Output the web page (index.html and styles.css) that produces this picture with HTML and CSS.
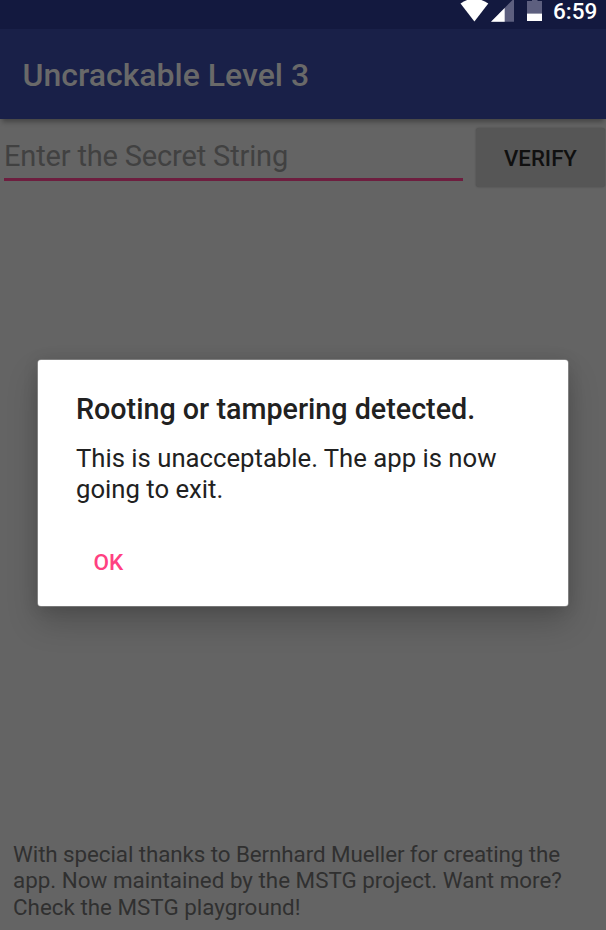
FILE: index.html
```html
<!DOCTYPE html>
<html lang="en">
<head>
<meta charset="utf-8">
<title>Uncrackable Level 3</title>
<link rel="stylesheet" href="styles.css">
</head>
<body>
<div class="screen">
  <header class="status">
    <svg class="signals" width="86" height="28" viewBox="0 0 86 28">
      <path d="M.5 3.5Q14-6 28.300 3.500L14.400 21.500Z" fill="#fff"/>
      <path d="M31 21.800L54-1.500V21.800Z" fill="#5d5f7f"/>
      <path d="M31 21.800L44.700 8V21.800Z" fill="#fff"/>
      <path d="M72-2H77.500V1H82V13.500H67V1H72Z" fill="#5d5f7f"/>
      <path d="M67 13.500H82V21H67Z" fill="#fff"/>
    </svg>
    <span class="clock">6:59</span>
  </header>
  <div class="appbar"><h1 class="title">Uncrackable Level 3</h1></div>
  <main class="content">
    <div class="form">
      <div class="field"><span class="hint">Enter the Secret String</span></div>
      <button class="verify">VERIFY</button>
    </div>
    <p class="credits"><span class="first">With special thanks to Bernhard Mueller for creating the</span><br><span>app. Now maintained by the MSTG project. Want more?</span><br><span>Check the MSTG playground!</span></p>
  </main>
  <section class="dialog" role="dialog">
    <h2 class="heading">Rooting or tampering detected.</h2>
    <p class="message">This is unacceptable. The app is now<br>going to exit.</p>
    <button class="ok">OK</button>
  </section>
</div>
</body>
</html>
```

FILE: styles.css
```css
* { box-sizing: border-box; }
body { margin: 0; font-family: Roboto, sans-serif; background: #646464; }
.screen { position: relative; width: 606px; height: 930px; overflow: hidden; display: flex; flex-direction: column; }
.status { height: 29px; background: #13193f; display: flex; padding-left: 460px; }
.signals { flex: none; }
.clock { margin-left: 7px; color: #fff; font-size: 22.5px; line-height: 23px; font-weight: 500; }
.appbar { height: 90px; background: #192048; padding-left: 22.5px; box-shadow: 0 5px 5px -2px rgba(0,0,0,.32); }
.title { margin: 0; font-size: 32px; line-height: 93px; font-weight: 500; color: #696969; }
.content { flex: 1; display: flex; flex-direction: column; justify-content: space-between; }
.form { display: flex; padding: 8px 1px 0 4px; justify-content: space-between; }
.field { width: 459px; height: 54px; border-bottom: 3px solid #6d1e3f; }
.hint { font-size: 29px; letter-spacing: -.16px; line-height: 58px; color: #414141; }
.verify { width: 129px; height: 59px; margin-top: 1px; border: 0; border-radius: 3px; padding: 0; background: #565656; color: #101010; font: 500 22.2px/60px Roboto, sans-serif; box-shadow: 0 0 2px rgba(0,0,0,.3); }
.credits { margin: 0 0 10px 13px; color: #303030; font-size: 22.4px; line-height: 26.5px; white-space: nowrap; }
.first { letter-spacing: -.09px; }
.dialog { position: absolute; left: 38px; top: 360px; width: 530px; height: 246px; padding: 31px 38px; border-radius: 3px; background: #fff; color: #212121; box-shadow: 0 0 0 .6px #a0a0a0, 0 16px 32px rgba(0,0,0,.2), 0 2px 16px rgba(0,0,0,.12); }
.heading { margin: 0; font-size: 28.7px; line-height: 36px; font-weight: 500; white-space: nowrap; }
.message { margin: 16px 0 0; font-size: 25.7px; line-height: 31px; white-space: nowrap; }
.ok { display: block; margin: 41px 0 0 17.5px; padding: 0; border: 0; background: none; color: #ff4081; font: 500 22.5px/32px Roboto, sans-serif; }
```
